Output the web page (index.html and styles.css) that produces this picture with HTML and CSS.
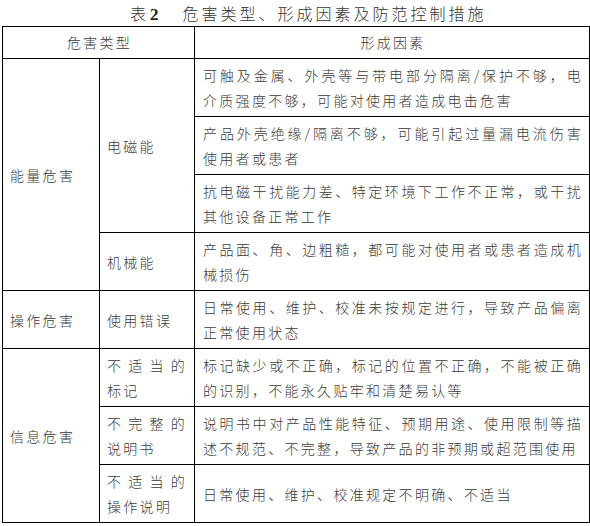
FILE: index.html
```html
<!DOCTYPE html>
<html lang="zh-CN">
<head>
<meta charset="utf-8">
<title>表2 危害类型、形成因素及防范控制措施</title>
<link rel="stylesheet" href="styles.css">
</head>
<body>
<div class="caption"><span class="cap-label">表</span><span class="cap-num">2</span><span class="cap-text">危害类型、形成因素及防范控制措施</span></div>
<table class="hazard">
  <colgroup>
    <col class="c1">
    <col class="c2">
    <col class="c3">
  </colgroup>
  <thead>
    <tr><th colspan="2">危害类型</th><th>形成因素</th></tr>
  </thead>
  <tbody>
    <tr>
      <td class="cat" rowspan="4">能量危害</td>
      <td class="sub" rowspan="3">电磁能</td>
      <td class="desc">可触及金属、外壳等与带电部分隔离/保护不够，电介质强度不够，可能对使用者造成电击危害</td>
    </tr>
    <tr><td class="desc">产品外壳绝缘/隔离不够，可能引起过量漏电流伤害使用者或患者</td></tr>
    <tr><td class="desc">抗电磁干扰能力差、特定环境下工作不正常，或干扰其他设备正常工作</td></tr>
    <tr>
      <td class="sub">机械能</td>
      <td class="desc">产品面、角、边粗糙，都可能对使用者或患者造成机械损伤</td>
    </tr>
    <tr>
      <td class="cat">操作危害</td>
      <td class="sub">使用错误</td>
      <td class="desc">日常使用、维护、校准未按规定进行，导致产品偏离正常使用状态</td>
    </tr>
    <tr>
      <td class="cat" rowspan="3">信息危害</td>
      <td class="sub">不适当的标记</td>
      <td class="desc">标记缺少或不正确，标记的位置不正确，不能被正确的识别，不能永久贴牢和清楚易认等</td>
    </tr>
    <tr>
      <td class="sub">不完整的说明书</td>
      <td class="desc">说明书中对产品性能特征、预期用途、使用限制等描述不规范、不完整，导致产品的非预期或超范围使用</td>
    </tr>
    <tr>
      <td class="sub">不适当的操作说明</td>
      <td class="desc">日常使用、维护、校准规定不明确、不适当</td>
    </tr>
  </tbody>
</table>
</body>
</html>
```

FILE: styles.css
```css
html, body {
  margin: 0;
  padding: 0;
  background: #ffffff;
}

body {
  font-family: "Noto Sans CJK SC", "Noto Sans", sans-serif;
  font-weight: 300;
  color: #3a3a3a;
  font-size: 14px;
}

.caption {
  display: flex;
  align-items: baseline;
  height: 26px;
  line-height: 26px;
  padding-left: 130px;
  font-size: 16px;
  color: #333333;
}

.cap-num {
  font-family: "Liberation Serif", serif;
  font-weight: bold;
  font-size: 17px;
  margin-left: 4px;
  color: #222222;
}

.cap-text {
  margin-left: 24px;
  letter-spacing: 3px;
}

.hazard {
  margin-left: 2px;
  border-collapse: collapse;
  table-layout: fixed;
  width: 587px;
}

.hazard .c1 { width: 97px; }
.hazard .c2 { width: 95px; }
.hazard .c3 { width: 395px; }

.hazard th,
.hazard td {
  border: 1px solid #000000;
  line-height: 25px;
  letter-spacing: 2.3px;
  font-weight: 300;
  vertical-align: middle;
}

.hazard th {
  padding: 3px 6px 3px 8px;
  text-align: center;
}

.hazard td {
  padding: 4px 6px 3px 8px;
}

.hazard td.cat {
  padding-left: 7px;
  text-align: left;
}

.hazard td.sub {
  padding-left: 7px;
  padding-right: 7px;
  text-align: justify;
}

.hazard td.desc {
  text-align: justify;
}
```
